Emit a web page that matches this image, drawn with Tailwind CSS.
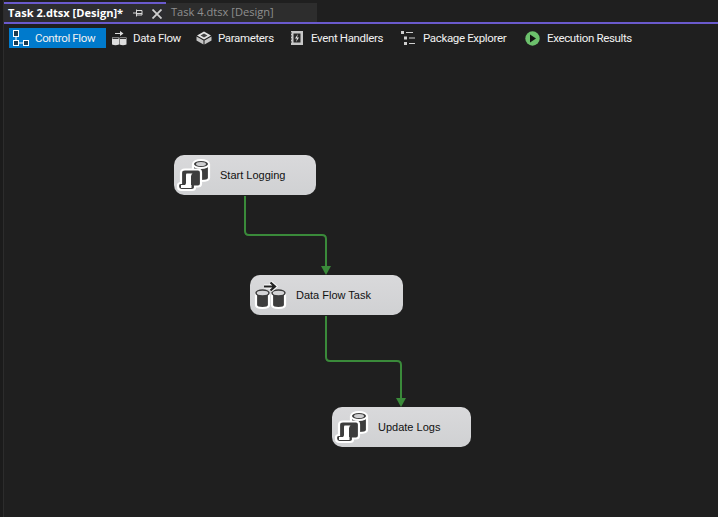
<!DOCTYPE html>
<html><head><meta charset="utf-8"><script src="https://cdn.jsdelivr.net/npm/@tailwindcss/browser@4"></script></head>
<body class="bg-[#1f1f1f] font-['Roboto',sans-serif]">
<div class="relative w-[718px] h-[517px] overflow-hidden bg-[#1f1f1f] flex">
  <div class="w-1 h-full shrink-0 bg-[#1b1b1b] border-r border-[#2c2c2c]"></div>
  <div class="flex-1 flex flex-col min-w-0">
  <div class="flex h-[22px] items-end shrink-0 font-['Open_Sans'] text-[11.1px]">
    <div class="relative w-[162px] h-5 bg-[#2d2d30] flex items-center text-white font-bold pl-1 border-t-2 border-[#6a5acd] leading-none">
      <span class="whitespace-nowrap">Task 2.dtsx [Design]*</span>
      <svg class="absolute left-[129px] top-[5px]" width="10" height="8" viewBox="0 0 10 8" fill="none" stroke="#d8d8d8"><path d="M0 4h3M3.5 0.5v7M3.5 1.5h5.5v4.5h-5.5M3.5 4.500h5.500"/></svg>
      <svg class="absolute left-[148px] top-[5px]" width="10" height="10" viewBox="0 0 10 10" stroke="#cfcfcf" stroke-width="1.8"><path d="M0.5 0.5l9 9M9.5 0.5l-9 9"/></svg>
    </div>
    <div class="w-[151px] h-[19px] bg-[#2d2d2d] flex items-center text-[#8f8f8f] pl-[5px]">Task 4.dtsx [Design]</div>
  </div>
  <div class="h-0.5 bg-[#6a5acd] shrink-0"></div>
  <div class="flex items-center h-7 pl-[5px] text-[11.5px] tracking-[-0.35px] text-[#f1f1f1] shrink-0">
    <div class="w-[97px] h-5 bg-[#007acc] flex items-center mr-[5px]">
      <div class="w-[26px] pl-[3px]">
        <svg class="block" width="18" height="16" viewBox="0 0 18 16" fill="#1b3a50" stroke="#fff"><rect x="1.500" y="0.500" width="5" height="6"/><rect x="1.500" y="10.500" width="5" height="5"/><rect x="11.500" y="10.500" width="5" height="5"/><path d="M4 6.500v4M6.500 13h5"/></svg>
      </div>
      <span class="pt-[2px]">Control Flow</span>
    </div>
    <div class="w-[85px] flex items-center">
      <svg class="w-[22px] shrink-0" width="22" height="16" viewBox="0 0 22 16"><path d="M4 3h5V1l3.5 2.5L9 6V4H4z" fill="#ddd"/><path d="M1 7.500h7v7q-3.500 1.500-7 0zM8.500 7.500h7v7q-3.500 1.500-7 0z" fill="#ddd"/><path d="M1.500 8.500h6M9 8.500h6" stroke="#333"/></svg>
      <span class="pt-[2px]">Data Flow</span>
    </div>
    <div class="w-[94px] flex items-center">
      <svg class="w-[22px] shrink-0" width="22" height="14" viewBox="0 0 22 14"><path d="M8 0.500l7 4-7 4-7-4z" fill="#e4e4e4"/><path d="M8 2.500l3.500 2-3.500 2-3.500-2z" fill="#444"/><path d="M0.500 5.500l7 4v4l-7-4zM15.500 5.500l-7 4v4l7-4z" fill="#c4c4c4"/></svg>
      <span class="pt-[2px]">Parameters</span>
    </div>
    <div class="w-[111px] flex items-center">
      <svg class="w-[21px] shrink-0" width="21" height="14" viewBox="0 0 21 14"><rect x="1" y="0" width="12" height="14" fill="#c8c8c8"/><rect x="3.500" y="2.500" width="7" height="9" fill="#2a2a2a"/><path d="M8 3L5 7.500h2L6 11l3-4.500H7z" fill="#e8e8e8"/><path d="M0 2h2M0 5h2M0 8h2M0 11h2" stroke="#333"/></svg>
      <span class="pt-[2px]">Event Handlers</span>
    </div>
    <div class="w-[124px] flex items-center">
      <svg class="w-[22px] shrink-0" width="22" height="14" viewBox="0 0 22 14" fill="#cfcfcf"><rect x="0" y="0" width="3" height="3"/><rect x="3" y="5.500" width="3" height="3"/><rect x="3" y="11" width="3" height="3"/><rect x="5" y="1" width="7" height="1"/><rect x="8" y="6.500" width="6" height="1"/><rect x="8" y="12" width="6" height="1"/></svg>
      <span class="pt-[2px]">Package Explorer</span>
    </div>
    <div class="flex items-center">
      <svg class="w-[22px] shrink-0" width="22" height="15" viewBox="0 0 22 15"><circle cx="7.500" cy="7.500" r="7.200" fill="#6cc06c"/><path d="M5 3.500l6 4-6 4z" fill="#111"/></svg>
      <span class="pt-[2px]">Execution Results</span>
    </div>
  </div>
  </div>

  <svg class="absolute left-0 top-0" width="718" height="517" fill="none" stroke="#3a8a3a" stroke-width="2">
    <path d="M245 196v35q0 4 4 4h73q4 0 4 4v28"/>
    <path d="M326 316v41q0 4 4 4h67q4 0 4 4v34"/>
    <path d="M321 266h10l-5 9z" fill="#3a8a3a" stroke="none"/>
    <path d="M396 398h10l-5 9z" fill="#3a8a3a" stroke="none"/>
  </svg>

  <div class="absolute left-[174px] top-[155px] w-[142px] h-10 rounded-[10px] bg-gradient-to-b from-[#d9d9db] to-[#d0d1d3] flex items-center font-['Liberation_Sans'] text-[11px] text-[#111] pl-[46px]">Start Logging
    <svg class="absolute left-0 top-0" width="40" height="40" viewBox="0 0 40 40">
      <path d="M19 9v14q0 3 8 3t8-3V9" fill="#3d3d3d" stroke="#fff" stroke-width="2.200"/>
      <ellipse cx="27" cy="9" rx="8" ry="4" fill="#3d3d3d" stroke="#fff" stroke-width="2"/>
      <ellipse cx="27" cy="9" rx="5" ry="2" fill="#cfcfd1"/>
      <path d="M11 14.500h13q3 0 3 3v11q0 3-3 3h-3v1q0 2.500-3 2.500H7.500q-3.500 0-3.500-3.500v-1q0-2.500 3-2.500V18q0-3.500 4-3.500z" fill="#3d3d3d" stroke="#fff" stroke-width="2.200"/>
      <path d="M12.500 18.500h6q-1.500 1-1.500 3v8.500H11q1-1 1-2v-8q0-1 .5-1.500z" fill="#fff"/>
      <path d="M7 30h10.500v3H7z" fill="#fff"/>
    </svg>
  </div>
  <div class="absolute left-[250px] top-[275px] w-[153px] h-10 rounded-[10px] bg-gradient-to-b from-[#d9d9db] to-[#d0d1d3] flex items-center font-['Liberation_Sans'] text-[11px] text-[#111] pl-[46px]">Data Flow Task
    <svg class="absolute left-0 top-0" width="40" height="40" viewBox="0 0 40 40">
      <path d="M6 18v12q0 3 6.500 3t6.500-3V18" fill="#3d3d3d" stroke="#fff" stroke-width="2.200"/>
      <ellipse cx="12.500" cy="18" rx="6.500" ry="3" fill="#d4d4d6" stroke="#3d3d3d" stroke-width="1.500"/>
      <path d="M22 18v12q0 3 6.500 3t6.500-3V18" fill="#3d3d3d" stroke="#fff" stroke-width="2.200"/>
      <ellipse cx="28.500" cy="18" rx="6.500" ry="3" fill="#d4d4d6" stroke="#3d3d3d" stroke-width="1.500"/>
      <path d="M14 11.500h11M20.500 7.500l4.500 4-4.500 4" fill="none" stroke="#fff" stroke-width="4"/>
      <path d="M14 11.500h11M20.500 7.500l4.500 4-4.500 4" fill="none" stroke="#222" stroke-width="2.200"/>
    </svg>
  </div>
  <div class="absolute left-[332px] top-[407px] w-[139px] h-10 rounded-[10px] bg-gradient-to-b from-[#d9d9db] to-[#d0d1d3] flex items-center font-['Liberation_Sans'] text-[11px] text-[#111] pl-[46px]">Update Logs
    <svg class="absolute left-0 top-0" width="40" height="40" viewBox="0 0 40 40">
      <path d="M19 9v14q0 3 8 3t8-3V9" fill="#3d3d3d" stroke="#fff" stroke-width="2.200"/>
      <ellipse cx="27" cy="9" rx="8" ry="4" fill="#3d3d3d" stroke="#fff" stroke-width="2"/>
      <ellipse cx="27" cy="9" rx="5" ry="2" fill="#cfcfd1"/>
      <path d="M11 14.500h13q3 0 3 3v11q0 3-3 3h-3v1q0 2.500-3 2.500H7.500q-3.500 0-3.500-3.500v-1q0-2.500 3-2.500V18q0-3.500 4-3.500z" fill="#3d3d3d" stroke="#fff" stroke-width="2.200"/>
      <path d="M12.500 18.500h6q-1.500 1-1.500 3v8.500H11q1-1 1-2v-8q0-1 .5-1.500z" fill="#fff"/>
      <path d="M7 30h10.500v3H7z" fill="#fff"/>
    </svg>
  </div>
</div>
</body></html>
